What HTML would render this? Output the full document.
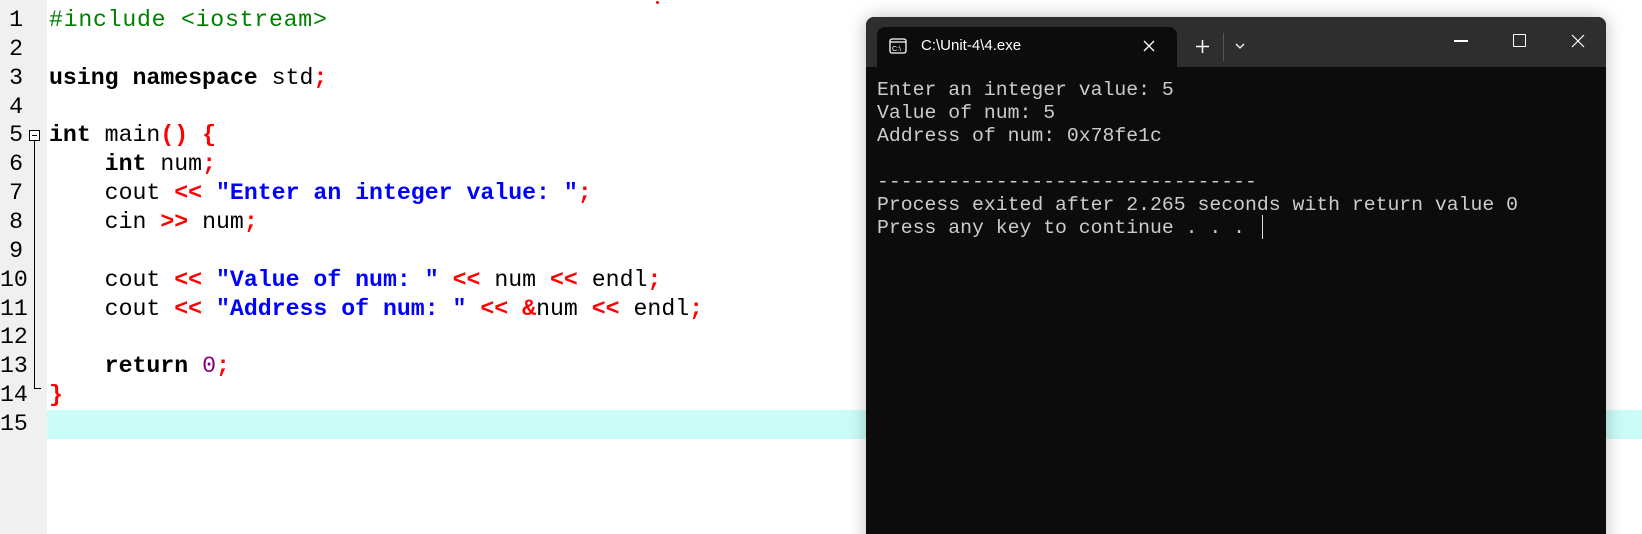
<!DOCTYPE html>
<html><head><meta charset="utf-8"><style>
html,body{margin:0;padding:0;width:1642px;height:534px;overflow:hidden;background:#fff;position:relative}
.gut{position:absolute;left:0;top:0;width:47px;height:534px;background:#f0f0f0}
.hl{position:absolute;left:47px;top:410px;width:1595px;height:29px;background:#ccfcf8}
.code,.nums{position:absolute;top:6px;font-family:"Liberation Mono",monospace;font-size:23.2px;line-height:28.86px;white-space:pre;color:#000}
.code{left:49px}
.nums{left:0;width:23px;text-align:right}
.g{color:#008000;letter-spacing:0.75px}.k{font-weight:bold}.r{color:#f00;font-weight:bold}.s{color:#00f;font-weight:bold}.p{color:#800080}
.fold{position:absolute;left:29px;top:130px;width:9px;height:9px;border:1px solid #000;background:#fff}
.fold:after{content:"";position:absolute;left:2px;top:4px;width:5px;height:1px;background:#000}
.vl{position:absolute;left:34px;top:141px;width:1px;height:248px;background:#000}
.hlz{position:absolute;left:34px;top:388px;width:7px;height:1px;background:#000}
.win{position:absolute;left:866px;top:17px;width:740px;height:540px;background:#0c0c0c;border-radius:8px 8px 0 0;box-shadow:0 0 18px rgba(0,0,0,.25);overflow:hidden}
.tb{position:absolute;left:0;top:0;width:740px;height:50px;background:#2e2e2e}
.tab{position:absolute;left:11px;top:10px;width:300px;height:40px;background:#0c0c0c;border-radius:8px 8px 0 0}
.tt{position:absolute;left:55px;top:20px;font-family:"Liberation Sans",sans-serif;font-size:15px;color:#fff}
.term{position:absolute;left:11px;top:62px;font-family:"Liberation Mono",monospace;font-size:19.8px;line-height:23px;color:#cccccc;white-space:pre}
</style></head><body>
<div style="position:absolute;left:656px;top:1px;width:3px;height:3px;background:#e00;border-radius:50%"></div>
<div class="gut"></div>
<div class="hl"></div>
<div class="nums">1
2
3
4
5
6
7
8
9
10
11
12
13
14
15</div>
<div class="fold"></div><div class="vl"></div><div class="hlz"></div>
<div class="code"><span class="g">#include &lt;iostream&gt;</span>

<span class="k">using namespace</span> std<span class="r">;</span>

<span class="k">int</span> main<span class="r">() {</span>
    <span class="k">int</span> num<span class="r">;</span>
    cout <span class="r">&lt;&lt;</span> <span class="s">"Enter an integer value: "</span><span class="r">;</span>
    cin <span class="r">&gt;&gt;</span> num<span class="r">;</span>

    cout <span class="r">&lt;&lt;</span> <span class="s">"Value of num: "</span> <span class="r">&lt;&lt;</span> num <span class="r">&lt;&lt;</span> endl<span class="r">;</span>
    cout <span class="r">&lt;&lt;</span> <span class="s">"Address of num: "</span> <span class="r">&lt;&lt;</span> <span class="r">&amp;</span>num <span class="r">&lt;&lt;</span> endl<span class="r">;</span>

    <span class="k">return</span> <span class="p">0</span><span class="r">;</span>
<span class="r">}</span>
</div>
<div class="win">
 <div class="tb"></div>
 <div class="tab"></div>
 <svg style="position:absolute;left:23px;top:21px" width="18" height="16" viewBox="0 0 18 16"><rect x="1" y="1" width="16" height="14" rx="2" fill="none" stroke="#fff" stroke-width="1.3"/><line x1="1" y1="4" x2="17" y2="4" stroke="#fff" stroke-width="1.2"/><text x="3" y="13" font-family="Liberation Sans" font-size="7" fill="#fff">C:\</text></svg>
 <div class="tt">C:\Unit-4\4.exe</div>
 <svg style="position:absolute;left:277px;top:23px" width="12" height="12"><path d="M1 1L11 11M11 1L1 11" stroke="#fff" stroke-width="1.3"/></svg>
 <svg style="position:absolute;left:330px;top:23px" width="13" height="13"><path d="M6.5 0V13M0 6.5H13" stroke="#fff" stroke-width="1.5"/></svg>
 <div style="position:absolute;left:357px;top:16px;width:1px;height:28px;background:#555"></div>
 <svg style="position:absolute;left:369px;top:26px" width="10" height="7"><path d="M1 1L5 5L9 1" stroke="#fff" stroke-width="1.3" fill="none"/></svg>
 <div style="position:absolute;left:588px;top:23px;width:14px;height:1.5px;background:#fff"></div>
 <div style="position:absolute;left:647px;top:17px;width:11px;height:11px;border:1.3px solid #fff;border-radius:1px"></div>
 <svg style="position:absolute;left:705px;top:17px" width="14" height="14"><path d="M1 1L13 13M13 1L1 13" stroke="#fff" stroke-width="1.2"/></svg>
 <div class="term">Enter an integer value: 5
Value of num: 5
Address of num: 0x78fe1c

--------------------------------
Process exited after 2.265 seconds with return value 0
Press any key to continue . . . </div>
 <div style="position:absolute;left:396px;top:198px;width:1px;height:24px;background:#ddd"></div>
</div>
</body></html>
